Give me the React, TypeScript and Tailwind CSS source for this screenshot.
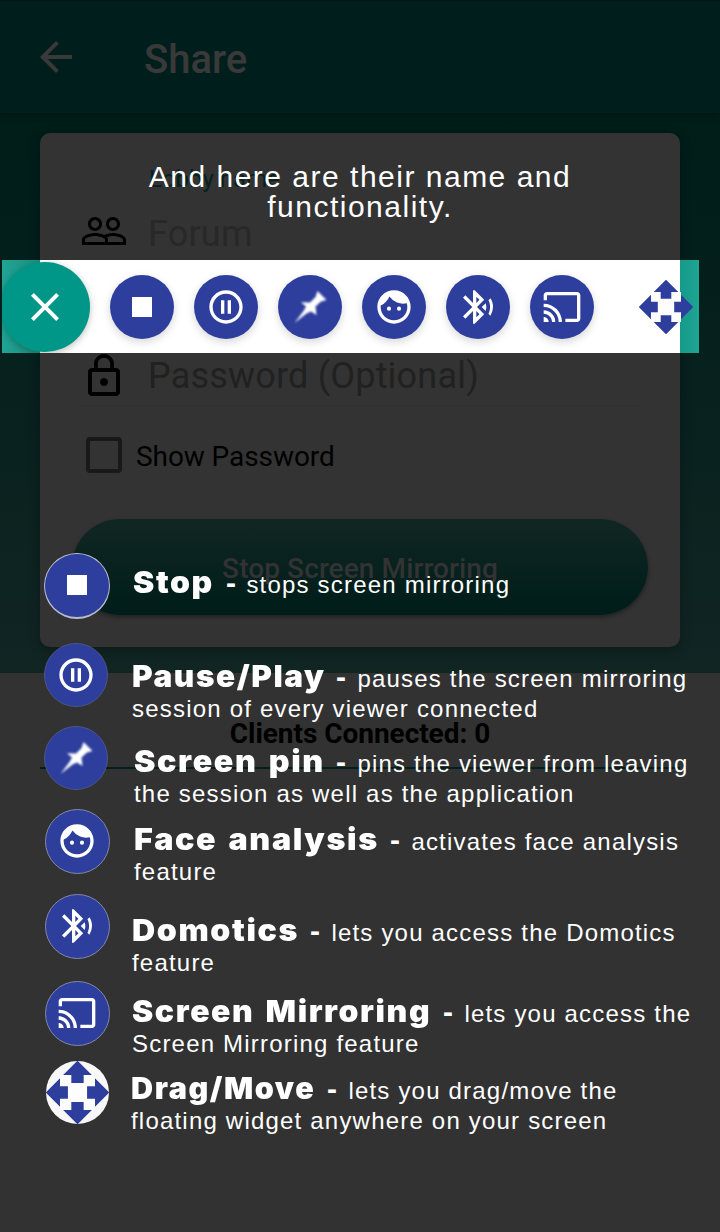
import type { ReactNode } from 'react';
import {
  MdArrowBack,
  MdBluetoothAudio,
  MdCast,
  MdClose,
  MdFace,
  MdLockOutline,
  MdPauseCircleOutline,
  MdPeopleOutline,
} from 'react-icons/md';

function StopIcon() {
  return <span className="block size-5 bg-white" />;
}

function PinIcon() {
  return (
    <svg viewBox="0 0 64 64" className="size-16 shrink-0 blur-[0.9px]" fill="#fff">
      <path d="M39.5 16L48.5 25L43 26.5L37.5 31.5L38.5 40L33 36.5L28.5 38.5L16.5 48L25.5 36L28 31.5L23 27.3L32 27.5L37.5 22Z" />
    </svg>
  );
}

function MoveIcon({ className }: { className: string }) {
  return (
    <svg viewBox="-27 -27 54 54" className={className}>
      <rect x="-15" y="-15" width="30" height="30" fill="#fdfdfd" />
      <g fill="#2e3e9d">
        {[0, 90, 180, 270].map((a) => (
          <path key={a} transform={`rotate(${a})`} d="M0 -27.3L12.3 -15H5.3V-8.2H-5.3V-15H-12.3Z" />
        ))}
      </g>
    </svg>
  );
}

const icons: Record<string, ReactNode> = {
  stop: <StopIcon />,
  pause: <MdPauseCircleOutline className="size-10 shrink-0" />,
  pin: <PinIcon />,
  face: <MdFace className="size-10 shrink-0" />,
  domotics: <MdBluetoothAudio className="size-10 shrink-0" />,
  cast: <MdCast className="size-10 shrink-0" />,
};

const legend = [
  {
    icon: 'stop', title: 'Stop', lines: ['stops screen mirroring'],
    row: 'h-[90px] pl-[44px]', disc: 'size-[66px] border border-b-2 border-[#b9bccb] pb-px', gap: 'w-[23px]',
    text: 'pt-[17px]', width: 'w-[93px] scale-x-[1.067]', dash: 'tracking-[2.5px]',
  },
  {
    icon: 'pause', title: 'Pause/Play', lines: ['pauses the screen mirroring', 'session of every viewer connected'],
    row: 'h-[83px] pl-[44px]', disc: 'size-[64px] border border-[#4c5586]', gap: 'w-[24px]',
    text: 'pt-[21px]', width: 'w-[204px] scale-x-[1.05]', dash: 'tracking-[3.5px]',
  },
  {
    icon: 'pin', title: 'Screen pin', lines: ['pins the viewer from leaving', 'the session as well as the application'],
    row: 'h-[83px] pl-[44px]', disc: 'size-[64px] border border-[#4c5586]', gap: 'w-[26px]',
    text: 'pt-[23px]', width: 'w-[202px] scale-x-[1.074]', dash: 'tracking-[3.5px]',
  },
  {
    icon: 'face', title: 'Face analysis', lines: ['activates face analysis', 'feature'],
    row: 'h-[85px] pl-[45px]', disc: 'size-[65px] border border-[#8388a5] pr-px pb-px', gap: 'w-[24px]',
    text: 'pt-[18px]', width: 'w-[256px] scale-x-[1.075]', dash: 'tracking-[3.5px]',
  },
  {
    icon: 'domotics', title: 'Domotics', lines: ['lets you access the Domotics', 'feature'],
    row: 'h-[87px] pl-[45px]', disc: 'size-[65px] border border-[#8388a5] pr-px pb-px', gap: 'w-[22px]',
    text: 'pt-[24px]', width: 'w-[178px] scale-x-[1.07]', dash: 'tracking-[3.5px]',
  },
  {
    icon: 'cast', title: 'Screen Mirroring', lines: ['lets you access the', 'Screen Mirroring feature'],
    row: 'h-[80px] pl-[45px]', disc: 'size-[65px] border border-[#8388a5] pr-px pb-px', gap: 'w-[22px]',
    text: 'pt-[18px]', width: 'w-[311px] scale-x-[1.064]', dash: 'tracking-[3.5px]',
  },
  {
    icon: 'move', title: 'Drag/Move', lines: ['lets you drag/move the', 'floating widget anywhere on your screen'],
    row: 'h-[80px] pl-[46px]', disc: 'size-[63px] bg-[#f8f8f8]', gap: 'w-[22px]',
    text: 'pt-[15px]', width: 'w-[196px] scale-x-[1.02]', dash: 'tracking-[3.5px]',
  },
];

function SharePage() {
  return (
    <div className="flex h-full flex-col bg-[#323232] font-[Roboto,sans-serif]">
      <header className="z-10 flex h-[113px] items-start border-t border-[#001714] bg-[#001f1c] pt-8 pl-8 text-[#393939] shadow-[0_2px_6px_rgba(0,0,0,0.25)]">
        <MdArrowBack className="size-12" />
        <h1 className="ml-16 pt-[3px] text-[40px] leading-[48px] font-medium">Share</h1>
      </header>
      <main className="h-[560px] shrink-0 bg-linear-to-b from-[#001d18] to-[#112523] px-10 pt-5">
        <section className="flex h-[514px] flex-col rounded-[10px] bg-[#333333] shadow-[0_3px_12px_rgba(0,0,0,0.3)]">
          <p className="mt-[31px] ml-[109px] h-[30px] text-[24px] leading-[30px] text-[#02221e]">Lobby name</p>
          <div className="mt-[13px] ml-10 flex h-12 items-start">
            <MdPeopleOutline className="size-12 text-black" />
            <span className="ml-5 pt-[3px] text-[36px] leading-[48px] tracking-[0.2px] text-[#282828]">Forum</span>
          </div>
          <div className="mx-10 mt-[97px] flex h-[55px] items-start border-b-2 border-[#303030]">
            <MdLockOutline className="size-12 text-black" />
            <span className="ml-5 text-[36px] leading-[48px] tracking-[0.2px] text-[#212121]">Password (Optional)</span>
          </div>
          <div className="mt-[30px] ml-[46px] flex h-9 items-start">
            <span className="size-9 rounded-[4px] border-4 border-[#191919]" />
            <span className="ml-3.5 pt-0.5 text-[28px] leading-9 tracking-[-0.08px] text-black">Show Password</span>
          </div>
          <div className="mx-8 mt-[46px] flex h-24 items-center justify-center rounded-full bg-linear-to-b from-[#112623] to-[#001d19] pt-1 text-[28px] font-medium tracking-[0.1px] text-[#333333] shadow-[0_2px_4px_rgba(0,0,0,0.4)]">
            Stop Screen Mirroring
          </div>
        </section>
      </main>
      <p className="mx-10 flex h-[96px] items-center justify-center border-b-2 border-[#00201c] pt-[27px] text-[28px] font-bold tracking-[-0.04px] text-black">
        Clients Connected: 0
      </p>
    </div>
  );
}

function Toolbar() {
  return (
    <div className="ml-0.5 h-[93px] w-[697px] overflow-hidden bg-[linear-gradient(90deg,#20a494_0,#1a9080_38px,#fff_38px,#fff_678px,#159b89_678px,#20a494_697px)]">
      <div className="-ml-0.5 flex h-[93px] w-[720px] items-center gap-5 pt-px text-white">
        <div className="flex size-[90px] items-center justify-center rounded-full bg-[#009688] shadow-[0_2px_7px_rgba(0,0,0,0.25)]">
          <MdClose className="size-12" />
        </div>
        {Object.keys(icons).map((k) => (
          <div key={k} className="flex size-16 items-center justify-center rounded-full bg-[#2e3e9d] shadow-[0_3px_8px_rgba(0,0,0,0.16)]">
            {icons[k]}
          </div>
        ))}
        <MoveIcon className="ml-[25px] size-[54px]" />
      </div>
    </div>
  );
}

export default function App() {
  return (
    <div className="relative h-[1232px] w-[720px] overflow-hidden">
      <SharePage />
      <div className="absolute inset-0 z-20 flex flex-col font-['Liberation_Sans',Arial,sans-serif] text-white">
        <p className="h-[260px] pt-[162px] text-center text-[30px] leading-[30px] tracking-[1.5px]">
          And here are their name and
          <br />
          functionality.
        </p>
        <Toolbar />
        <div className="mt-[200px] flex flex-col">
          {legend.map((l) => (
            <div key={l.title} className={`flex shrink-0 items-start ${l.row}`}>
              <div className={`flex shrink-0 items-center justify-center overflow-hidden rounded-full ${l.icon === 'move' ? '' : 'bg-[#2e3e9d]'} ${l.disc}`}>
                {l.icon === 'move' ? <MoveIcon className="size-[63px] shrink-0" /> : icons[l.icon]}
              </div>
              <span className={`shrink-0 ${l.gap}`} />
              <p className={`text-[24px] leading-[30px] tracking-[1.2px] whitespace-nowrap ${l.text}`}>
                <b className={`inline-block origin-left font-[Inter,sans-serif] text-[30px] leading-[0] font-black tracking-[1.5px] [word-spacing:3px] ${l.width}`}>{l.title}</b>
                <span className={`text-[30px] leading-[0] font-bold ${l.dash}`}>-</span> {l.lines[0]}
                {l.lines[1] && <br />}
                {l.lines[1]}
              </p>
            </div>
          ))}
        </div>
      </div>
    </div>
  );
}
